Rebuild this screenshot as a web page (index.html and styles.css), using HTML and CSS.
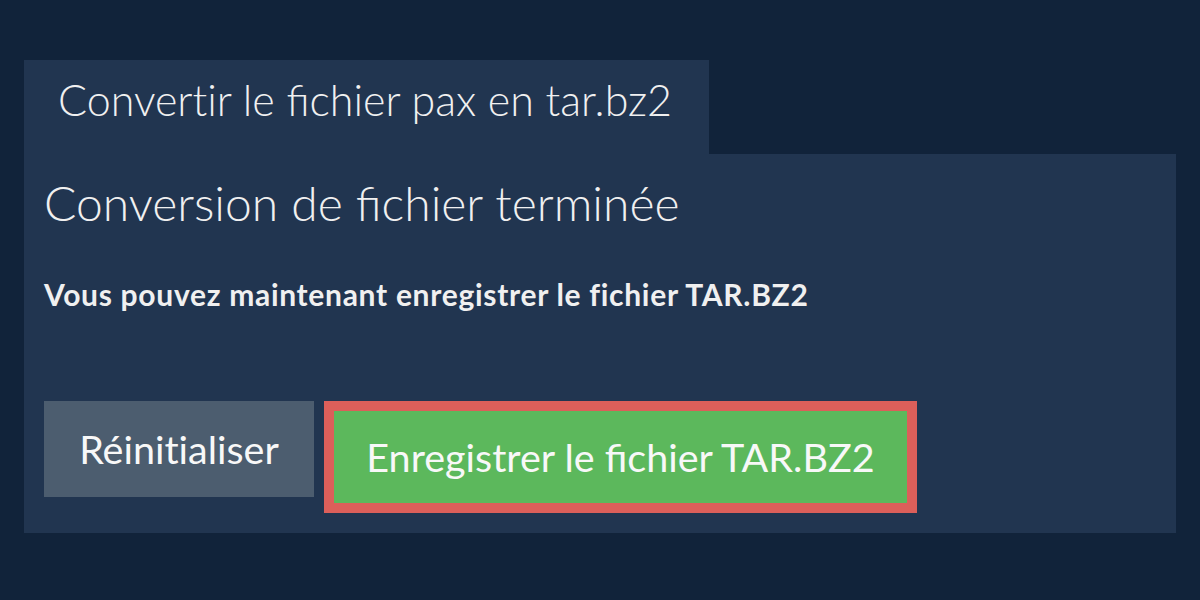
FILE: index.html
```html
<!DOCTYPE html>
<html lang="fr">
<head>
<meta charset="utf-8">
<title>Convertir le fichier pax en tar.bz2</title>
<link rel="stylesheet" href="styles.css">
</head>
<body>
<main class="wrap">
  <div class="tab">Convert&zwnj;ir le fichier pax en tar.bz2</div>
  <section class="panel">
    <h1 class="title">Conversion de fichier terminée</h1>
    <p class="msg">Vous pouvez maintenant enregistrer le fichier TAR.BZ2</p>
    <div class="actions">
      <button class="btn btn-reset">Réinit&zwnj;ialiser</button>
      <button class="btn btn-save">Enregistrer le fichier TAR.BZ2</button>
    </div>
  </section>
</main>
</body>
</html>
```

FILE: styles.css
```css
html, body {
  margin: 0;
  padding: 0;
  background: #11233a;
  height: 100%;
}
body {
  font-family: Lato, "Open Sans", sans-serif;
  color: #f0f0f0;
}
.wrap {
  padding: 60px 24px 0 24px;
}
.tab {
  display: inline-block;
  background: #213550;
  height: 94px;
  box-sizing: border-box;
  padding: 14px 37px 0 34px;
  font-size: 43px;
  font-weight: 300;
  line-height: 52px;
  white-space: nowrap;
}
.panel {
  background: #213550;
  height: 379px;
  box-sizing: border-box;
  padding: 20px 20px 0 20px;
}
.title {
  margin: 0;
  font-size: 48px;
  font-weight: 300;
  line-height: 58px;
  white-space: nowrap;
}
.msg {
  margin: 44px 0 0 0;
  font-size: 30px;
  font-weight: 700;
  letter-spacing: 0.7px;
  line-height: 36px;
  white-space: nowrap;
}
.actions {
  display: flex;
  align-items: flex-start;
  gap: 10px;
  margin-top: 89px;
}
.btn {
  font-family: inherit;
  font-size: 39.5px;
  font-weight: 400;
  color: #f8f8f8;
  border: none;
  padding: 0;
  line-height: 48px;
  cursor: pointer;
}
.btn-reset {
  background: #4c5d6f;
  width: 270px;
  height: 96px;
}
.btn-save {
  background: #5cb85c;
  border: 10px solid #dc5f5a;
  width: 593px;
  height: 112px;
  box-sizing: border-box;
}
```
